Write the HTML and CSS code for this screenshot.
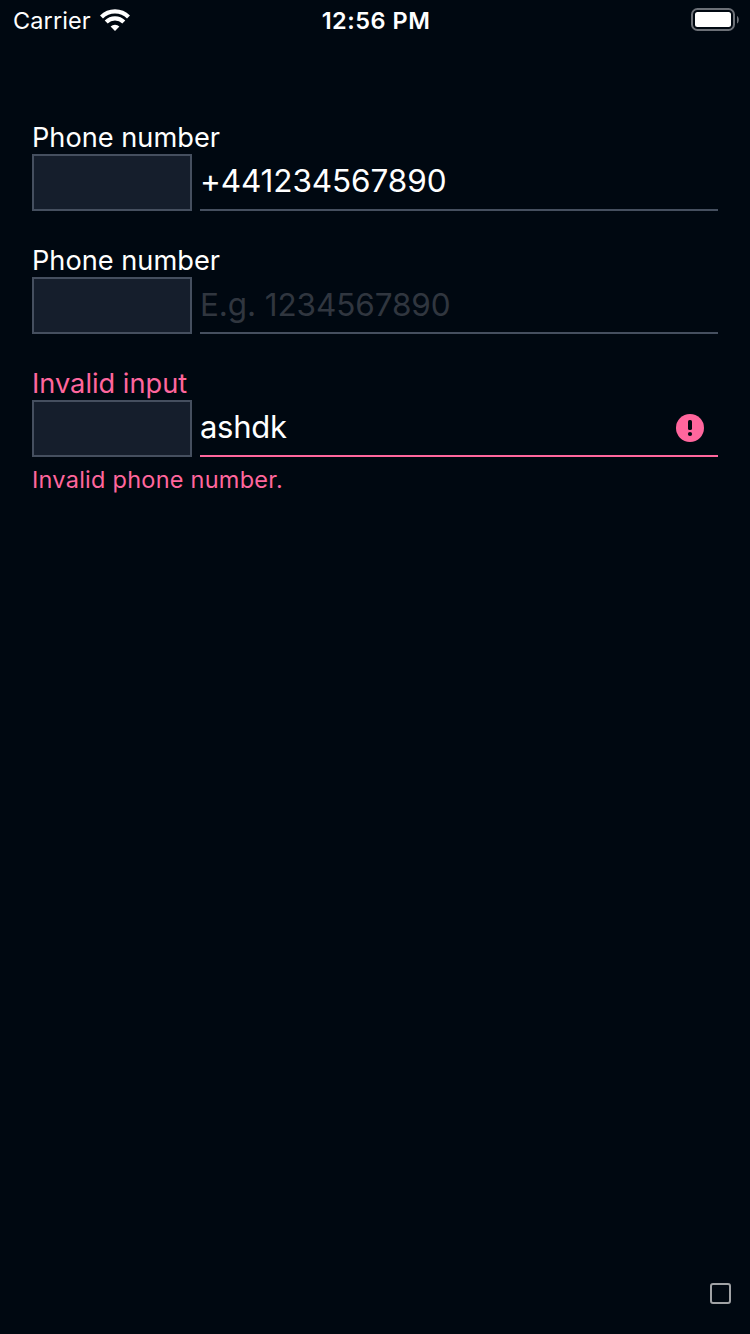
FILE: index.html
```html
<!DOCTYPE html>
<html lang="en">
<head>
<meta charset="utf-8">
<title>Phone number</title>
<link rel="stylesheet" href="styles.css">
</head>
<body>
<div class="screen">
  <header class="status">
    <div class="status-left">
      <span class="carrier">Carrier</span>
      <svg class="wifi" width="30" height="22" viewBox="0 0 30 22" fill="none" stroke="#fff" stroke-width="4.2">
        <path d="M1.500 8a19.200 19.200 0 0 1 27 0"/>
        <path d="M6.200 13a12.500 12.500 0 0 1 17.600 0"/>
        <path d="M15 22l-4.400-4.400a6.300 6.300 0 0 1 8.800 0z" fill="#fff" stroke="none"/>
      </svg>
    </div>
    <span class="clock">12:56 PM</span>
    <svg class="battery" width="48" height="24" viewBox="0 0 48 24">
      <rect x="1" y="1" width="42" height="21" rx="5.5" fill="none" stroke="#6c7077" stroke-width="2"/>
      <rect x="4" y="4" width="36" height="15" rx="2.5" fill="#fff"/>
      <path d="M46 8c2.400 1.200 2.400 6.400 0 7.600z" fill="#6c7077"/>
    </svg>
  </header>
  <main class="form">
    <section class="field">
      <label class="label">Phone number</label>
      <div class="row">
        <div class="country"></div>
        <div class="input"><span class="value">+441234567890</span></div>
      </div>
    </section>
    <section class="field">
      <label class="label">Phone number</label>
      <div class="row">
        <div class="country"></div>
        <div class="input"><span class="value placeholder">E.g. 1234567890</span></div>
      </div>
    </section>
    <section class="field">
      <label class="label label-invalid">Invalid input</label>
      <div class="row">
        <div class="country"></div>
        <div class="input invalid">
          <span class="value value-word">ashdk</span>
          <svg class="alert" width="28" height="28" viewBox="0 0 28 28">
            <circle cx="14" cy="14" r="14" fill="#ff669d"/>
            <rect x="12" y="6" width="4" height="10" rx="1.6" fill="#000811"/>
            <circle cx="14" cy="20" r="2.100" fill="#000811"/>
          </svg>
        </div>
      </div>
      <p class="error">Invalid phone number.</p>
    </section>
  </main>
  <footer class="footer">
    <div class="toggle"></div>
  </footer>
</div>
</body>
</html>
```
FILE: styles.css
```css
* { box-sizing: border-box; }
body {
  margin: 0;
  background: #000811;
  color: #fff;
  font-family: Inter, "Liberation Sans", sans-serif;
}
.screen {
  width: 750px;
  height: 1334px;
  display: flex;
  flex-direction: column;
}
.status {
  height: 40px;
  padding: 0 11px 0 13px;
  display: grid;
  grid-template-columns: 1fr auto 1fr;
  grid-template-rows: 40px;
  align-items: center;
  line-height: 38px;
}
.status-left { display: flex; align-items: center; gap: 9px; }
.carrier { font-size: 23.5px; letter-spacing: 0.1px; padding-top: 2px; }
.clock { font-size: 23.5px; font-weight: 600; letter-spacing: 0.5px; padding-top: 2px; }
.battery { justify-self: end; }
.form { padding: 80px 32px 0; flex: 1; }
.field { height: 123px; }
.label {
  display: block;
  height: 34px;
  padding-top: 1px;
  line-height: 34px;
  font-size: 27.2px;
  white-space: nowrap;
}
.label-invalid, .error { color: #ff669d; }
.row { display: flex; gap: 8px; height: 57px; }
.country {
  width: 160px;
  background: #151e2c;
  border: 2px solid #454f5f;
}
.input {
  flex: 1;
  display: flex;
  align-items: center;
  justify-content: space-between;
  border-bottom: 2px solid #454f5f;
}
.invalid { border-color: #ff669d; padding-right: 14px; }
.value { font-size: 31.5px; line-height: 53px; padding-bottom: 2px; white-space: nowrap; letter-spacing: -0.1px; }
.placeholder { color: #30363f; padding-bottom: 0; }
.value-word { font-size: 31px; letter-spacing: -0.3px; }
.error {
  margin: 8px 0 0;
  font-size: 23.5px;
  line-height: 30px;
  letter-spacing: 0.25px;
}
.footer {
  height: 51px;
  padding-right: 19px;
  display: flex;
  justify-content: flex-end;
}
.toggle {
  width: 21px;
  height: 21px;
  border: 2px solid #a0a2a5;
  border-radius: 3px;
}
```
